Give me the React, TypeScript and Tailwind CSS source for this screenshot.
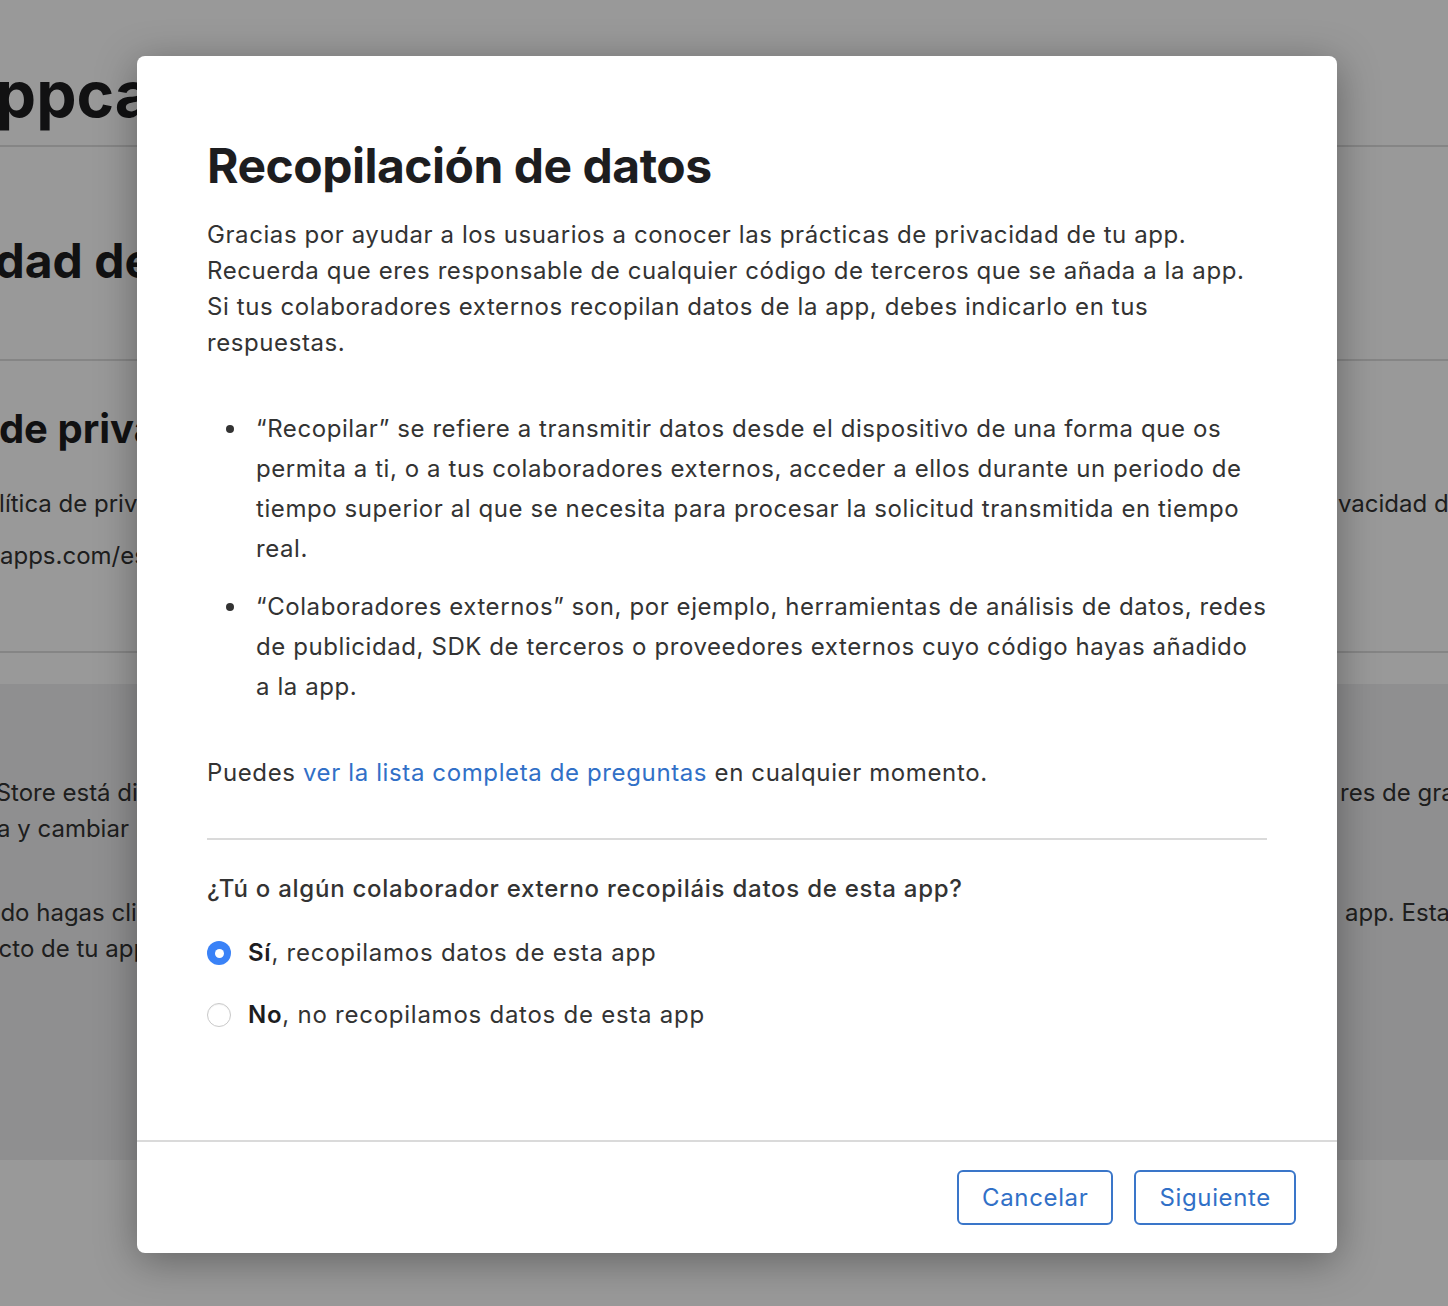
import React from "react";

const bodyFont = "font-['Inter','Noto_Sans',sans-serif]";

const BackgroundPage: React.FC = () => (
  <div className="flex flex-col text-[#1d1d1f]">
    <div className="h-[147px] border-b-2 border-[#dedede] pt-[62px]">
      <p className="-ml-[52px] whitespace-nowrap text-[64px] font-bold leading-[64px]">
        Appcast
      </p>
    </div>
    <div className="h-[214px] border-b-2 border-[#dedede] pt-[86px]">
      <p className="-ml-[167px] whitespace-nowrap text-[48px] font-bold leading-[56px]">
        Privacidad de la app
      </p>
    </div>
    <div className="h-[292px] border-b-2 border-[#dedede] pt-[45px] text-[#333]">
      <p className="-ml-[155px] whitespace-nowrap text-[40px] font-bold leading-[46px] text-[#1d1d1f]">
        Política de privacidad
      </p>
      <div className="mt-[34px] flex whitespace-nowrap text-[24px] leading-[36px]">
        <div className="w-[1308px] shrink-0 overflow-hidden">
          <span className="-ml-[30px] inline-block">política de privacidad</span>
        </div>
        <span>privacidad de la app</span>
      </div>
      <p className="mt-[16px] whitespace-nowrap text-[24px] leading-[36px]">
        apps.com/es/privacidad
      </p>
    </div>
    <div className="h-[31px]" />
    <div className="flex h-[476px] flex-col bg-[#efeff0] pt-[91px] text-[24px] leading-[36px] text-[#333]">
      <div className="flex whitespace-nowrap">
        <div className="w-[1340px] shrink-0 overflow-hidden">
          <span className="-ml-[57px] inline-block">App Store está disponible</span>
        </div>
        <span>res de gran tamaño</span>
      </div>
      <p className="-ml-[3px] whitespace-nowrap">a y cambiar la configuración</p>
      <div className="mt-[48px] flex whitespace-nowrap">
        <div className="w-[1345px] shrink-0 overflow-hidden">
          <span className="-ml-[59px] inline-block">Cuando hagas clic</span>
        </div>
        <span>app. Esta información</span>
      </div>
      <p className="-ml-[68px] whitespace-nowrap">producto de tu app</p>
    </div>
  </div>
);

const Bullet: React.FC<{ lines: string[] }> = ({ lines }) => (
  <li className="flex">
    <div className="flex h-[40px] w-[49px] shrink-0 items-center">
      <span className="ml-[19px] h-[8px] w-[8px] rounded-full bg-[#333]" />
    </div>
    <p className="whitespace-nowrap">
      {lines.map((l, i) => (
        <React.Fragment key={i}>
          {l}
          {i < lines.length - 1 && <br />}
        </React.Fragment>
      ))}
    </p>
  </li>
);

const Radio: React.FC<{ checked?: boolean; strong: string; rest: string }> = ({
  checked,
  strong,
  rest,
}) => (
  <label className="flex items-center gap-[17px] leading-[36px]">
    {checked ? (
      <span className="flex h-[24px] w-[24px] items-center justify-center rounded-full bg-[#3a82f7]">
        <span className="h-[9px] w-[9px] rounded-full bg-white" />
      </span>
    ) : (
      <span className="h-[24px] w-[24px] rounded-full border border-[#c9c9c9] bg-white shadow-[inset_0_1px_1px_rgba(0,0,0,0.06)]" />
    )}
    <span>
      <span className="font-semibold text-[#1d1d1f]">{strong}</span>
      {rest}
    </span>
  </label>
);

const DataModal: React.FC = () => (
  <div className="absolute left-[137px] top-[56px] flex h-[1197px] w-[1200px] flex-col rounded-[8px] bg-white shadow-[0_8px_40px_rgba(0,0,0,0.35)]">
    <div className="flex-1 px-[70px] pt-[82px] text-[24px] tracking-[0.58px] text-[#333]">
      <h2 className="text-[48px] font-bold leading-[56px] tracking-[-0.5px] text-[#1d1d1f]">
        Recopilación de datos
      </h2>
      <p className="mt-[23px] whitespace-nowrap leading-[36px]">
        Gracias por ayudar a los usuarios a conocer las prácticas de privacidad de tu app.
        <br />
        Recuerda que eres responsable de cualquier código de terceros que se añada a la app.
        <br />
        Si tus colaboradores externos recopilan datos de la app, debes indicarlo en tus
        <br />
        respuestas.
      </p>
      <ul className="mt-[48px] flex flex-col gap-[18px] leading-[40px]">
        <Bullet
          lines={[
            "“Recopilar” se refiere a transmitir datos desde el dispositivo de una forma que os",
            "permita a ti, o a tus colaboradores externos, acceder a ellos durante un periodo de",
            "tiempo superior al que se necesita para procesar la solicitud transmitida en tiempo",
            "real.",
          ]}
        />
        <Bullet
          lines={[
            "“Colaboradores externos” son, por ejemplo, herramientas de análisis de datos, redes",
            "de publicidad, SDK de terceros o proveedores externos cuyo código hayas añadido",
            "a la app.",
          ]}
        />
      </ul>
      <p className="mt-[48px] leading-[36px] tracking-[0.62px]">
        Puedes{" "}
        <a href="#" className="text-[#3170c7]">
          ver la lista completa de preguntas
        </a>{" "}
        en cualquier momento.
      </p>
      <div className="mt-[47px] h-[2px] bg-[#dadada]" />
      <p className="mt-[31px] font-medium leading-[36px] tracking-[0.75px]">
        ¿Tú o algún colaborador externo recopiláis datos de esta app?
      </p>
      <div className="mt-[28px] flex flex-col gap-[26px] tracking-[0.75px]">
        <Radio checked strong="Sí" rest=", recopilamos datos de esta app" />
        <Radio strong="No" rest=", no recopilamos datos de esta app" />
      </div>
    </div>
    <div className="flex h-[113px] items-center justify-end gap-[21px] border-t-2 border-[#dadada] px-[41px] tracking-[0.65px]">
      <button className="h-[55px] rounded-[6px] border-2 border-[#3a76c9] px-[23px] text-[24px] text-[#3170c7]">
        Cancelar
      </button>
      <button className="h-[55px] rounded-[6px] border-2 border-[#3a76c9] px-[23px] text-[24px] text-[#3170c7]">
        Siguiente
      </button>
    </div>
  </div>
);

export default function App() {
  return (
    <div className={`relative h-[1306px] w-[1448px] overflow-hidden bg-white ${bodyFont}`}>
      <BackgroundPage />
      <div className="absolute inset-0 bg-black/40" />
      <DataModal />
    </div>
  );
}
